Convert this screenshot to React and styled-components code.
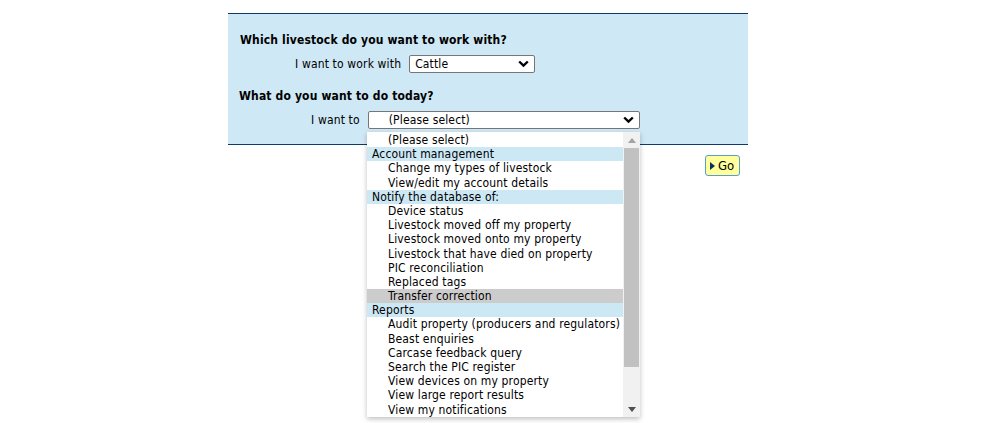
import React from 'react';
import styled, { createGlobalStyle } from 'styled-components';

const GlobalStyle = createGlobalStyle`
  body {
    margin: 0;
    background: #fff;
    font-family: "DejaVu Sans Condensed", "DejaVu Sans", Verdana, sans-serif;
    font-size: 12px;
    letter-spacing: 0.15px;
    color: #000;
  }
`;

const SPage = styled.div`
  position: relative;
  width: 995px;
  height: 423px;
  padding-top: 13px;
  box-sizing: border-box;
`;

const SPanel = styled.div`
  margin-left: 228px;
  width: 520px;
  height: 132px;
  box-sizing: border-box;
  background: #cfe8f5;
  border-top: 1px solid #0b3a6b;
  border-bottom: 1px solid #0b3a6b;
  padding: 18px 0 0 12px;
`;

const SHeading = styled.h2`
  margin: 0;
  font-size: 12px;
  font-weight: 700;
  line-height: 16px;
  margin-left: ${({ $shift }) => $shift || 0}px;
`;

const SRow = styled.div`
  display: flex;
  align-items: center;
  gap: 8px;
  padding-left: ${({ $indent }) => $indent}px;
  margin: 7px 0 15px;
`;

const SLabel = styled.span`
  line-height: 18px;
`;

const SSelect = styled.div`
  display: flex;
  align-items: center;
  justify-content: space-between;
  width: ${({ $width }) => $width}px;
  height: 18px;
  box-sizing: border-box;
  background: #fff;
  border: 1px solid #767676;
  border-radius: 2px;
  padding: 0 5px 0 ${({ $pad }) => $pad}px;
`;

const SList = styled.div`
  position: absolute;
  left: 367px;
  top: 132px;
  width: 273px;
  height: 285px;
  display: flex;
  background: #fff;
  box-shadow: 0 2px 5px rgba(0, 0, 0, 0.25);
`;

const SOptions = styled.ul`
  list-style: none;
  margin: 0;
  padding: 1px 0 0;
  flex: 1;
  overflow: hidden;
`;

const SOption = styled.li`
  height: 14.2px;
  line-height: 14.2px;
  white-space: nowrap;
  padding-left: ${({ $group }) => ($group ? 5 : 21)}px;
  background: ${({ $group, $hover }) => ($group ? '#cde8f5' : $hover ? '#cccccc' : 'transparent')};
`;

const SScrollbar = styled.div`
  width: 17px;
  background: #f1f1f1;
  display: flex;
  flex-direction: column;
  align-items: center;
`;

const SArrow = styled.div`
  height: 16px;
  display: flex;
  align-items: center;
  justify-content: center;
`;

const SThumb = styled.div`
  width: 15px;
  height: 219px;
  background: #c1c1c1;
`;

const STrack = styled.div`
  flex: 1;
`;

const SGoRow = styled.div`
  display: flex;
  justify-content: flex-end;
  width: 740px;
  margin-top: 10px;
`;

const SGo = styled.button`
  display: flex;
  align-items: center;
  gap: 3px;
  height: 21px;
  width: 35px;
  box-sizing: border-box;
  padding: 0 0 0 4px;
  background: #ffff9c;
  border: 1px solid #5a9bd4;
  border-radius: 3px;
  font-family: inherit;
  font-size: 13px;
  color: #000;
`;

function Chevron() {
  return (
    <svg width="11" height="8" viewBox="0 0 11 8">
      <path d="M1.2 1.5 L5.5 5.6 L9.8 1.5" fill="none" stroke="#000" strokeWidth="2.4" />
    </svg>
  );
}

const options = [
  { t: '(Please select)' },
  { t: 'Account management', g: true },
  { t: 'Change my types of livestock' },
  { t: 'View/edit my account details' },
  { t: 'Notify the database of:', g: true },
  { t: 'Device status' },
  { t: 'Livestock moved off my property' },
  { t: 'Livestock moved onto my property' },
  { t: 'Livestock that have died on property' },
  { t: 'PIC reconciliation' },
  { t: 'Replaced tags' },
  { t: 'Transfer correction', h: true },
  { t: 'Reports', g: true },
  { t: 'Audit property (producers and regulators)' },
  { t: 'Beast enquiries' },
  { t: 'Carcase feedback query' },
  { t: 'Search the PIC register' },
  { t: 'View devices on my property' },
  { t: 'View large report results' },
  { t: 'View my notifications' },
];

export default function App() {
  return (
    <SPage>
      <GlobalStyle />
      <SPanel>
        <SHeading>Which livestock do you want to work with?</SHeading>
        <SRow $indent={55}>
          <SLabel>I want to work with</SLabel>
          <SSelect $width={126} $pad={5}>
            <span>Cattle</span>
            <Chevron />
          </SSelect>
        </SRow>
        <SHeading $shift={-1}>What do you want to do today?</SHeading>
        <SRow $indent={71}>
          <SLabel>I want to</SLabel>
          <SSelect $width={272} $pad={20}>
            <span>(Please select)</span>
            <Chevron />
          </SSelect>
        </SRow>
      </SPanel>
      <SGoRow>
        <SGo>
          <svg width="5" height="8" viewBox="0 0 5 8">
            <path d="M0 0 L5 4 L0 8 Z" fill="#0b2f5c" />
          </svg>
          Go
        </SGo>
      </SGoRow>
      <SList>
        <SOptions>
          {options.map((o) => (
            <SOption key={o.t} $group={o.g} $hover={o.h}>
              {o.t}
            </SOption>
          ))}
        </SOptions>
        <SScrollbar>
          <SArrow>
            <svg width="8" height="5" viewBox="0 0 8 5">
              <path d="M0 5 L4 0 L8 5 Z" fill="#a3a3a3" />
            </svg>
          </SArrow>
          <SThumb />
          <STrack />
          <SArrow>
            <svg width="8" height="5" viewBox="0 0 8 5">
              <path d="M0 0 L4 5 L8 0 Z" fill="#505050" />
            </svg>
          </SArrow>
        </SScrollbar>
      </SList>
    </SPage>
  );
}
